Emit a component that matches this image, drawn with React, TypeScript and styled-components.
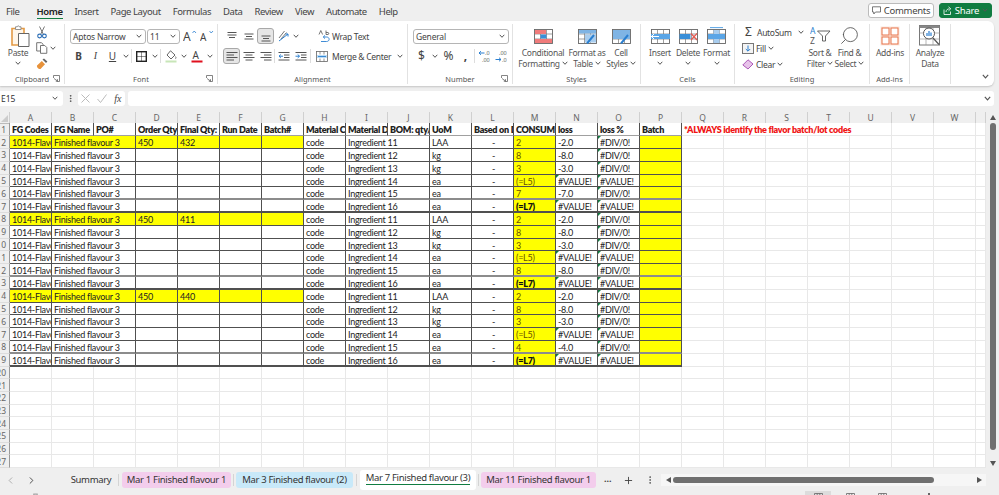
import React from "react";
import styled, { createGlobalStyle } from "styled-components";
import { ChevronLeft, ChevronRight, MoreVertical, Plus, Search } from "lucide-react";

const ui = `"Noto Sans", "Open Sans", sans-serif`;
const cellFont = `Lato, "Noto Sans", sans-serif`;

const GlobalStyle = createGlobalStyle`
  html, body {
    margin: 0;
    background: #efefef;
    overflow: hidden;
  }
  #root {
    width: 999px;
    height: 495px;
    overflow: hidden;
  }
`;

const Page = styled.div`
  display: flex;
  flex-direction: column;
  width: 999px;
  height: 495px;
  font-family: ${ui};
  color: #333;
  overflow: hidden;
`;

/* ---------- top menu ---------- */

const TopBar = styled.div`
  display: flex;
  align-items: center;
  height: 21px;
  flex: none;
  padding: 0 7px 0 6px;
  gap: 12px;
`;

const MenuItem = styled.div<{ $active?: boolean }>`
  font-size: 9.5px;
  letter-spacing: -0.42px;
  line-height: 13px;
  padding-top: 2px;
  margin-left: ${(p) => (p.$active ? 5 : 0)}px;
  color: ${(p) => (p.$active ? "#222" : "#444")};
  font-weight: ${(p) => (p.$active ? 600 : 400)};
  border-bottom: 1.5px solid ${(p) => (p.$active ? "#107c41" : "transparent")};
`;

const TopActions = styled.div`
  display: flex;
  gap: 5px;
  margin-left: auto;
`;

const TopButton = styled.div<{ $primary?: boolean; $w: number }>`
  display: flex;
  align-items: center;
  justify-content: center;
  gap: 3px;
  width: ${(p) => p.$w}px;
  height: 15px;
  box-sizing: border-box;
  border-radius: 3px;
  font-size: 9.5px;
  letter-spacing: -0.25px;
  background: ${(p) => (p.$primary ? "#107c41" : "#fff")};
  color: ${(p) => (p.$primary ? "#fff" : "#444")};
  border: 1px solid ${(p) => (p.$primary ? "#107c41" : "#bbb")};
`;

/* ---------- ribbon ---------- */

const Ribbon = styled.div`
  display: flex;
  flex: none;
  height: 65px;
  box-sizing: border-box;
  padding-top: 3px;
  margin-right: 5px;
  background: #fff;
  border-radius: 0 6px 6px 0;
  box-shadow: 0 1px 2px rgba(0, 0, 0, 0.18);
`;

const Group = styled.div<{ $w: number }>`
  display: flex;
  flex-direction: column;
  flex: none;
  width: ${(p) => p.$w}px;
  height: 60px;
  box-sizing: border-box;
  border-right: 1px solid #e2e2e2;
`;

const GroupBody = styled.div<{ $pad?: number }>`
  display: flex;
  flex: 1;
  min-height: 0;
  padding-left: ${(p) => p.$pad ?? 0}px;
`;

const GroupLabel = styled.div`
  display: grid;
  grid-template-columns: 1fr auto 1fr;
  align-items: center;
  height: 11px;
  flex: none;
  font-size: 7.5px;
  color: #555;
  span:last-child {
    justify-self: end;
    margin-right: 4px;
    display: flex;
  }
`;

const Stack = styled.div`
  display: flex;
  flex-direction: column;
  gap: 4px;
  padding-top: 4px;
`;

const ToolRow = styled.div`
  display: flex;
  align-items: center;
  height: 16px;
`;

const Tool = styled.div<{ $w?: number; $on?: boolean }>`
  display: flex;
  align-items: center;
  justify-content: center;
  flex: none;
  box-sizing: border-box;
  width: ${(p) => p.$w ?? 17}px;
  height: 16px;
  border-radius: 3px;
  background: ${(p) => (p.$on ? "#e6e6e6" : "transparent")};
  border: 1px solid ${(p) => (p.$on ? "#a8a8a8" : "transparent")};
`;

const ToolSep = styled.div<{ $gap?: number }>`
  width: 1px;
  height: 14px;
  flex: none;
  background: #ddd;
  margin: 0 ${(p) => p.$gap ?? 1}px;
`;

const ToolGap = styled.div<{ $w: number }>`
  width: ${(p) => p.$w}px;
  flex: none;
`;

const Select = styled.div<{ $w: number }>`
  display: flex;
  align-items: center;
  justify-content: space-between;
  box-sizing: border-box;
  flex: none;
  width: ${(p) => p.$w}px;
  height: 15px;
  margin-right: 1px;
  padding: 0 3px 0 2px;
  border: 1px solid #b5b5b5;
  border-radius: 3px;
  font-size: 8.5px;
  letter-spacing: -0.2px;
  color: #444;
  white-space: nowrap;
`;

const ToolText = styled.span`
  font-size: 8.5px;
  letter-spacing: -0.3px;
  color: #444;
  white-space: nowrap;
`;

const Glyph = styled.span<{ $serif?: boolean; $bold?: boolean; $italic?: boolean; $under?: boolean; $size?: number; $color?: string }>`
  font-family: ${(p) => (p.$serif ? `"Liberation Serif", serif` : ui)};
  font-weight: ${(p) => (p.$bold ? 700 : 400)};
  font-style: ${(p) => (p.$italic ? "italic" : "normal")};
  text-decoration: ${(p) => (p.$under ? "underline" : "none")};
  font-size: ${(p) => p.$size ?? 9}px;
  color: ${(p) => p.$color ?? "#444"};
  line-height: 1;
`;

const BigButton = styled.div<{ $w: number }>`
  display: flex;
  flex-direction: column;
  align-items: center;
  flex: none;
  width: ${(p) => p.$w}px;
  font-size: 8.5px;
  letter-spacing: -0.3px;
  line-height: 11px;
  color: #555;
  white-space: nowrap;
  text-align: center;
`;

const BigIcon = styled.div<{ $shift?: number }>`
  display: flex;
  align-items: center;
  justify-content: center;
  height: 23px;
  flex: none;
  padding-left: ${(p) => p.$shift ?? 0}px;
`;

const LabelLine = styled.div`
  display: flex;
  align-items: center;
  justify-content: center;
  gap: 2px;
  height: 11px;
`;

const SmallColumn = styled.div<{ $w: number }>`
  display: flex;
  flex-direction: column;
  width: ${(p) => p.$w}px;
  flex: none;
`;

const SmallRow = styled.div`
  display: flex;
  align-items: center;
  height: 16px;
  gap: 2px;
`;

const CollapseSlot = styled.div`
  display: flex;
  align-items: flex-end;
  margin-left: auto;
  padding: 0 5px 7px 0;
`;

const Magnifier = styled(Search)`
  transform: scaleX(-1);
`;

/* ---------- formula bar ---------- */

const FormulaBar = styled.div`
  display: flex;
  align-items: center;
  flex: none;
  height: 15px;
  margin-top: 5px;
  margin-right: 5px;
`;

const NameBox = styled.div`
  display: flex;
  align-items: center;
  justify-content: space-between;
  box-sizing: border-box;
  width: 63px;
  height: 15px;
  padding: 0 5px 0 1px;
  background: #fff;
  border-radius: 0 3px 3px 0;
  font-size: 8.5px;
  color: #333;
`;

const FnBox = styled.div`
  display: flex;
  align-items: center;
  justify-content: space-around;
  width: 47px;
  height: 15px;
  background: #fff;
  border-radius: 3px;
  margin: 0 3px 0 0;
`;

const FormulaInput = styled.div`
  display: flex;
  align-items: center;
  justify-content: flex-end;
  flex: 1;
  height: 15px;
  padding-right: 3px;
  background: #fff;
  border-radius: 3px;
`;

const DotsSlot = styled.div`
  display: flex;
  justify-content: center;
  width: 15px;
`;

/* ---------- sheet ---------- */

const SheetArea = styled.div`
  display: flex;
  flex: none;
  height: 362px;
  margin-top: 1px;
  padding-top: 5px;
  box-sizing: border-box;
`;

const SheetGrid = styled.div`
  width: 986px;
  flex: none;
  overflow: hidden;
`;

const Row = styled.div<{ $h: number }>`
  display: grid;
  grid-template-columns: 10px repeat(23, 42px) 10px;
  height: ${(p) => p.$h}px;
`;

const Corner = styled.div`
  display: flex;
  align-items: flex-end;
  justify-content: flex-end;
  padding: 0 1px 1px 0;
  border-right: 1px solid #d0d0d0;
  border-bottom: 1px solid #bbb;
`;

const ColHead = styled.div`
  display: flex;
  align-items: center;
  justify-content: center;
  box-sizing: border-box;
  font-size: 8.5px;
  color: #666;
  border-right: 1px solid #d0d0d0;
  border-bottom: 1px solid #777;
`;

const RowHead = styled.div`
  display: flex;
  align-items: center;
  justify-content: flex-end;
  box-sizing: border-box;
  overflow: hidden;
  padding-right: 3px;
  font-size: 8.5px;
  color: #666;
  border-right: 1px solid #999;
  border-bottom: 1px solid #ddd;
`;

const Cell = styled.div<{
  $fill?: string;
  $bold?: boolean;
  $color?: string;
  $center?: boolean;
  $right?: string;
  $bottom?: string;
  $heavy?: boolean;
  $span?: number;
  $flag?: boolean;
}>`
  position: relative;
  box-sizing: border-box;
  min-width: 0;
  overflow: hidden;
  grid-column: span ${(p) => p.$span ?? 1};
  padding-left: 2px;
  font-family: ${cellFont};
  font-size: 9px;
  letter-spacing: ${(p) => (p.$bold ? -0.28 : -0.26)}px;
  line-height: 13px;
  white-space: nowrap;
  text-align: ${(p) => (p.$center ? "center" : "left")};
  font-weight: ${(p) => (p.$bold ? 800 : 400)};
  color: ${(p) => p.$color ?? "#222"};
  background: ${(p) => p.$fill ?? "#fff"};
  border-right: 1px solid ${(p) => p.$right ?? "#e8e8e8"};
  border-bottom: ${(p) => (p.$heavy ? 2 : 1)}px solid ${(p) => p.$bottom ?? "#e8e8e8"};
  &::before {
    content: "";
    display: ${(p) => (p.$flag ? "block" : "none")};
    position: absolute;
    top: 0;
    left: 0;
    border-top: 3px solid #107c41;
    border-right: 3px solid transparent;
  }
`;

const VScroll = styled.div`
  display: flex;
  flex-direction: column;
  align-items: center;
  flex: 1;
  padding-top: 3px;
`;

const VThumb = styled.div`
  width: 6px;
  height: 327px;
  margin: 2px 0 11px;
  flex: none;
  border-radius: 3px;
  background: #6f6f6f;
`;

/* ---------- sheet tabs ---------- */

const TabBar = styled.div`
  display: flex;
  align-items: center;
  flex: none;
  height: 22px;
  font-size: 9.5px;
`;

const TabNav = styled.div`
  display: flex;
  align-items: center;
  gap: 10px;
  width: 67px;
  padding-left: 5px;
  box-sizing: border-box;
  flex: none;
`;

const Tab = styled.div<{ $tint?: string; $active?: boolean; $w: number }>`
  display: flex;
  align-items: center;
  justify-content: center;
  flex: none;
  width: ${(p) => p.$w}px;
  height: ${(p) => (p.$active ? 20 : 16)}px;
  box-sizing: border-box;
  padding-bottom: ${(p) => (p.$active ? 3 : 0)}px;
  border-radius: 3px;
  background: ${(p) => (p.$active ? "#fff" : p.$tint ?? "transparent")};
  color: #333;
  letter-spacing: -0.33px;
  white-space: nowrap;
  span {
    line-height: 12px;
    border-bottom: ${(p) => (p.$active ? "1.5px solid #107c41" : "none")};
  }
`;

const TabSep = styled.div<{ $gap: number }>`
  width: 1px;
  height: 12px;
  flex: none;
  background: #d4d4d4;
  margin: 0 ${(p) => p.$gap}px;
`;

const TabTools = styled.div`
  display: flex;
  align-items: center;
  justify-content: space-between;
  width: 51px;
  margin-left: 8px;
  flex: none;
`;

const HScroll = styled.div`
  display: flex;
  align-items: center;
  flex: none;
  width: 325px;
  height: 12px;
  margin-left: 6px;
  padding: 0 3px 0 5px;
  box-sizing: border-box;
  background: #f6f6f6;
`;

const HThumb = styled.div`
  width: 261px;
  height: 6px;
  margin: 0 auto 0 1px;
  border-radius: 3px;
  background: #6f6f6f;
`;

const StatusBar = styled.div`
  display: flex;
  align-items: flex-start;
  flex: none;
  height: 5px;
  overflow: hidden;
  padding-left: 33px;
`;

const AccessMark = styled.div`
  display: flex;
  width: 5px;
  height: 5px;
  padding-top: 2px;
  margin-right: 767px;
`;

const ViewButton = styled.div<{ $on?: boolean }>`
  display: flex;
  justify-content: center;
  width: 26px;
  height: 5px;
  padding-top: 2px;
  margin-right: 6px;
  background: ${(p) => (p.$on ? "#dcdcdc" : "transparent")};
`;

const ZoomHandle = styled.div`
  width: 2px;
  height: 3px;
  margin: 2px 0 0 27px;
  background: #666;
`;

/* ---------- icons ---------- */

const Chev: React.FC<{ size?: number }> = ({ size = 6 }) => (
  <svg width={size} height={size * 0.7} viewBox="0 0 6 4" fill="none" stroke="#555" strokeWidth="1">
    <path d="M0.7 0.7 3 3.2 5.3 0.7" />
  </svg>
);

const Launcher = () => (
  <svg width="7" height="7" viewBox="0 0 7 7" fill="none" stroke="#666" strokeWidth="0.8">
    <path d="M0.5 3V0.5H6.5V6.5H3.5M1 3.5 4.5 6M4.5 4.2V6H2.7" />
  </svg>
);

const Lines: React.FC<{ rows: number[][]; accent?: "in" | "out" }> = ({ rows, accent }) => (
  <svg width="12" height="11" viewBox="0 0 12 11" fill="none" stroke="#555" strokeWidth="1">
    {rows.map((r, i) => (
      <path key={i} d={`M${r[0]} ${r[1]}H${r[2]}`} />
    ))}
    {accent === "in" && <path d="M5 5.2H1M2.8 3.5 1 5.2 2.8 6.9" stroke="#2a7fd0" />}
    {accent === "out" && <path d="M0.5 5.2H4.5M2.7 3.5 4.5 5.2 2.7 6.9" stroke="#2a7fd0" />}
  </svg>
);

const indentRows = [
  [0.5, 1.5, 11.5],
  [6, 4, 11.5],
  [6, 6.5, 11.5],
  [0.5, 9, 11.5],
];

const ScissorsIcon = () => (
  <svg width="10" height="13" viewBox="0 0 10 13" fill="none">
    <path d="M2.5 0.5 6.2 8M7.5 0.5 3.8 8" stroke="#666" strokeWidth="0.9" />
    <circle cx="2.6" cy="10" r="1.9" stroke="#2a6db5" strokeWidth="1.1" />
    <circle cx="7.4" cy="10" r="1.9" stroke="#2a6db5" strokeWidth="1.1" />
  </svg>
);

const PasteIcon = () => (
  <svg width="20" height="22" viewBox="0 0 20 22" fill="none">
    <path d="M2 3.5H14V20H2Z" fill="#fff6ea" stroke="#e39a45" strokeWidth="1.6" />
    <path d="M5.5 4.5V1.8H7.2C7.6 0.4 9 0.4 9.3 1.8H11V4.5Z" fill="#fff" stroke="#888" strokeWidth="0.9" />
    <path d="M8.5 8.5H19V21.5H8.5Z" fill="#fff" stroke="#666" strokeWidth="1" />
  </svg>
);

const CopyIcon = () => (
  <svg width="12" height="12" viewBox="0 0 12 12" fill="none" stroke="#666" strokeWidth="0.9">
    <path d="M0.7 0.7H5.5L7 2.2V9H0.7Z" fill="#fff" />
    <path d="M4.5 3.5H8.8L10.8 5.5V11.3H4.5Z" fill="#fff" />
  </svg>
);

const BrushIcon = () => (
  <svg width="12" height="12" viewBox="0 0 12 12">
    <path d="M6.5 1.5 8 0.4 11.4 3.5 10 5Z" fill="#666" />
    <path d="M1 7.5 5.8 3 9 6.2 4.5 11C3 11.5 0.5 9.5 1 7.5Z" fill="#e8923a" />
  </svg>
);

const BorderIcon = () => (
  <svg width="11" height="11" viewBox="0 0 11 11" fill="none" stroke="#222">
    <rect x="0.7" y="0.7" width="9.6" height="9.6" strokeWidth="1.4" />
    <path d="M5.5 1V10M1 5.5H10" strokeWidth="0.5" />
  </svg>
);

const FillIcon = () => (
  <svg width="12" height="13" viewBox="0 0 12 13" fill="none">
    <path d="M5.5 0.8 10 5 6 9 2 5Z" stroke="#555" strokeWidth="0.9" fill="#fff" />
    <path d="M10.5 6.5C11.5 8 10.8 8.8 10.3 8.5" stroke="#555" strokeWidth="0.8" />
    <rect x="0.5" y="10.5" width="11" height="2" fill="#c8e6b8" />
  </svg>
);

const FontColorIcon = () => (
  <svg width="12" height="13" viewBox="0 0 12 13">
    <text x="1.5" y="9" fontSize="10" fill="#444" fontFamily="Noto Sans">A</text>
    <rect x="0.5" y="10.5" width="11" height="2" fill="#e0101e" />
  </svg>
);

const GrowIcon: React.FC<{ down?: boolean; size: number }> = ({ down, size }) => (
  <svg width="14" height="13" viewBox="0 0 14 13">
    <text x="0" y="11" fontSize={size} fill="#444" fontFamily="Noto Sans">A</text>
    <path d={down ? "M9.5 1 11.2 3 13 1" : "M9.5 3 11.2 1 13 3"} fill="none" stroke="#2a7fd0" strokeWidth="0.8" />
  </svg>
);

const OrientIcon = () => (
  <svg width="12" height="12" viewBox="0 0 12 12" fill="none">
    <path d="M2 8 7.5 1M4 9 9.5 2.5" stroke="#666" strokeWidth="0.9" />
    <path d="M2 11 11 4M11 4H8.5M11 4V6.5" stroke="#2a7fd0" strokeWidth="1" />
  </svg>
);

const WrapIcon = () => (
  <svg width="13" height="13" viewBox="0 0 13 13" fill="none">
    <path d="M3 11.5H8.5C12 11.5 12 7 8.5 7H5.5M7 5.4 5.2 7 7 8.6" stroke="#2a7fd0" strokeWidth="0.9" />
    <path d="M1 4.5 2.8 0.5 4.6 4.5M8 0.5V4.5H10C11 4.5 11 2.5 10 2.5H8" stroke="#555" strokeWidth="0.8" />
  </svg>
);

const MergeIcon = () => (
  <svg width="12" height="11" viewBox="0 0 12 11" fill="none">
    <rect x="0.5" y="0.5" width="11" height="10" stroke="#666" strokeWidth="0.8" />
    <rect x="1" y="4" width="10" height="3" fill="#bcdcf5" />
    <path d="M4 .5V3.5M8 .5V3.5M4 7.5V10.5M8 7.5V10.5" stroke="#666" strokeWidth="0.7" />
    <path d="M2 5.5H10" stroke="#2a7fd0" strokeWidth="0.9" />
  </svg>
);

const DecimalIcon: React.FC<{ more?: boolean }> = ({ more }) => (
  <svg width="14" height="13" viewBox="0 0 14 13" fill="none">
    {more ? (
      <>
        <text x="4" y="5" fontSize="5.5" fill="#666" fontFamily="Noto Sans">.00</text>
        <text x="7" y="12" fontSize="5.5" fill="#666" fontFamily="Noto Sans">.0</text>
        <path d="M0.5 9.5H6M4 7.7 6 9.5 4 11.3" stroke="#2a7fd0" strokeWidth="1" />
      </>
    ) : (
      <>
        <text x="7" y="5" fontSize="5.5" fill="#666" fontFamily="Noto Sans">.0</text>
        <text x="4" y="12" fontSize="5.5" fill="#666" fontFamily="Noto Sans">.00</text>
        <path d="M6.5 3H1M3 1.2 1 3 3 4.8" stroke="#2a7fd0" strokeWidth="1" />
      </>
    )}
  </svg>
);

const SheetBase: React.FC<{ children?: React.ReactNode }> = ({ children }) => (
  <svg width="19" height="17" viewBox="0 0 19 17" fill="none">
    <rect x="0.5" y="2.5" width="18" height="14" fill="#fff" stroke="#666" strokeWidth="0.9" />
    <path d="M6.5 2.5V16.5M12.5 2.5V16.5M0.5 7H18.5M0.5 12H18.5" stroke="#777" strokeWidth="0.7" />
    {children}
  </svg>
);

const ConditionalIcon = () => (
  <SheetBase>
    <rect x="1" y="3" width="11" height="4" fill="#f07b7b" />
    <rect x="1" y="12" width="17" height="4" fill="#f07b7b" />
    <rect x="6.5" y="7.5" width="6" height="4" fill="#3a8fd8" />
  </SheetBase>
);

const TableIcon = () => (
  <SheetBase>
    <rect x="1" y="3" width="17" height="3.5" fill="#7fb4e4" />
    <rect x="7" y="7.5" width="11" height="8" fill="#a8cdef" />
    <path d="M9 16.5 16 8" stroke="#2a7fd0" strokeWidth="2" />
  </SheetBase>
);

const CellStyleIcon = () => (
  <SheetBase>
    <rect x="1" y="3" width="17" height="9" fill="#7fb4e4" />
    <path d="M9 16.5 16 8" stroke="#2a7fd0" strokeWidth="2" />
  </SheetBase>
);

const InsertIcon = () => (
  <SheetBase>
    <rect x="0" y="7" width="19" height="5" fill="#5aa5e6" />
    <path d="M8 9.5H0M3 7 .5 9.5 3 12" stroke="#fff" strokeWidth="1" />
  </SheetBase>
);

const DeleteIcon = () => (
  <SheetBase>
    <rect x="0.5" y="7" width="11" height="5" fill="#3a8fd8" />
    <path d="M12 6.5 18 13M18 6.5 12 13" stroke="#e5584f" strokeWidth="1.2" />
  </SheetBase>
);

const FormatIcon = () => (
  <SheetBase>
    <path d="M3 .6H16" stroke="#5aa5e6" strokeWidth="1" />
    <rect x="6.5" y="3" width="6" height="13" fill="#a8cdef" />
    <rect x="1" y="7" width="17" height="5" fill="#5aa5e6" />
  </SheetBase>
);

const SortIcon = () => (
  <svg width="21" height="20" viewBox="0 0 21 20" fill="none">
    <text x="0" y="8" fontSize="8.5" fill="#2a7fd0" fontFamily="Noto Sans">A</text>
    <text x="0" y="18" fontSize="8.5" fill="#555" fontFamily="Noto Sans">Z</text>
    <path d="M7.5 5H20L15.5 10V15H12.5V10Z" stroke="#555" strokeWidth="0.9" />
  </svg>
);

const FillDownIcon = () => (
  <svg width="12" height="11" viewBox="0 0 12 11" fill="none">
    <rect x="0.5" y="0.5" width="11" height="10" stroke="#777" fill="#f4f4f4" />
    <path d="M6 2.5V8M3.8 6 6 8.2 8.2 6" stroke="#2a7fd0" />
  </svg>
);

const EraserIcon = () => (
  <svg width="12" height="11" viewBox="0 0 12 11" fill="none">
    <path d="M0.8 6 6 0.8 11 5 6 10Z" fill="#e7c3ea" stroke="#a44ab0" strokeWidth="0.9" />
  </svg>
);

const AddInsIcon = () => (
  <svg width="20" height="20" viewBox="0 0 20 20" fill="none">
    <rect x="0.5" y="0.5" width="19" height="19" fill="#fbe7de" />
    <g stroke="#e8754a" strokeWidth="1" fill="#fff">
      <rect x="2" y="2" width="7" height="7" />
      <rect x="11" y="2" width="7" height="7" />
      <rect x="2" y="11" width="7" height="7" />
      <rect x="11" y="11" width="7" height="7" />
    </g>
  </svg>
);

const AnalyzeIcon = () => (
  <svg width="22" height="21" viewBox="0 0 22 21" fill="none">
    <rect x="0.5" y="0.5" width="20" height="19.5" fill="#fff" stroke="#777" />
    <rect x="0.5" y="0.5" width="20" height="2.5" fill="#888" />
    <path d="M0.5 8H20.5M0.5 14H20.5M7 3V20M14 3V20" stroke="#999" strokeWidth="0.7" />
    <circle cx="10" cy="8.5" r="5.5" fill="#fff" stroke="#555" />
    <path d="M14 13 20 19.5" stroke="#555" strokeWidth="1.2" />
    <path d="M8 11V8M10 11V6M12 11V7.5" stroke="#2a7fd0" strokeWidth="1.2" />
  </svg>
);

const CommentIcon = () => (
  <svg width="9" height="9" viewBox="0 0 9 9" fill="none" stroke="#555" strokeWidth="0.8">
    <path d="M0.5 0.8H8.5V6H3.5L1.8 8V6H0.5Z" />
  </svg>
);

const ShareIcon = () => (
  <svg width="9" height="9" viewBox="0 0 9 9" fill="none" stroke="#fff" strokeWidth="0.8">
    <path d="M1 3.5V8.5H7.5V5.5M3 6C3 4 4.5 2.8 6.5 2.8M5.5 0.8 7.8 2.8 5.5 4.8" />
  </svg>
);

const MiniGrid = () => (
  <svg width="9" height="3" viewBox="0 0 9 3" fill="none" stroke="#666" strokeWidth="0.8">
    <path d="M.5 3V.5H8.5V3M3.2 .5V3M5.8 .5V3" />
  </svg>
);

const Arrow: React.FC<{ dir: "up" | "down" | "left" | "right" }> = ({ dir }) => {
  const d = { up: "M0 5 3 0 6 5Z", down: "M0 0 3 5 6 0Z", left: "M5 0 0 3 5 6Z", right: "M0 0 5 3 0 6Z" }[dir];
  return (
    <svg width="6" height="6" viewBox="0 0 6 6" fill="#555">
      <path d={d} />
    </svg>
  );
};

/* ---------- data ---------- */

const columns = "ABCDEFGHIJKLMNOPQRSTUVW".split("");
const headers = ["FG Codes", "FG Name", "PO#", "Order Qty:", "Final Qty:", "Run Date", "Batch#", "Material C", "Material D", "BOM: qty/u", "UoM", "Based on D", "CONSUME", "loss", "loss %", "Batch"];
const units = ["LAA", "kg", "kg", "ea", "ea", "ea"];
const dark = "#505050";
const yellow = "#ffff00";
const inkOnYellow = "#6a4f00";

const batches = [
  { final: "432", used: "7", loss: "-7.0" },
  { final: "411", used: "8", loss: "-8.0" },
  { final: "440", used: "4", loss: "-4.0" },
];

type Line = { first: boolean; ingredient: string; unit: string; qty: string; used: string; loss: string; pct: string; last: boolean; beforeLast: boolean; final: string };

const lines: Line[] = batches.flatMap((b) => {
  const used = ["2", "8", "3", "(=L5)", b.used, "(=L7)"];
  const loss = ["-2.0", "-8.0", "-3.0", "#VALUE!", b.loss, "#VALUE!"];
  const pct = ["#DIV/0!", "#DIV/0!", "#DIV/0!", "#VALUE!", "#DIV/0!", "#VALUE!"];
  return used.map((u, i) => ({
    first: i === 0,
    ingredient: `Ingredient ${11 + i}`,
    unit: units[i],
    qty: "450",
    used: u,
    loss: loss[i],
    pct: pct[i],
    last: i === 5,
    beforeLast: i === 4,
    final: b.final,
  }));
});

const EmptyCells: React.FC<{ count: number }> = ({ count }) => (
  <>
    {Array.from({ length: count }, (_, i) => (
      <Cell key={i} />
    ))}
  </>
);

const DataRow: React.FC<{ line: Line; num: number }> = ({ line, num }) => {
  const edge = {
    $right: dark,
    $bottom: line.beforeLast ? "#8c8c8c" : dark,
    $heavy: line.last || line.beforeLast,
  };
  const band = line.first ? yellow : undefined;
  return (
    <Row $h={12.8}>
      <RowHead>{num}</RowHead>
      <Cell {...edge} $fill={band}>1014-Flavo</Cell>
      <Cell {...edge} $fill={band} $span={2}>Finished flavour 3</Cell>
      <Cell {...edge} $fill={band}>{line.first && line.qty}</Cell>
      <Cell {...edge} $fill={band}>{line.first && line.final}</Cell>
      <Cell {...edge} $fill={band} />
      <Cell {...edge} $fill={band} />
      <Cell {...edge}>code</Cell>
      <Cell {...edge} $span={2}>{line.ingredient}</Cell>
      <Cell {...edge}>{line.unit}</Cell>
      <Cell {...edge} $center>-</Cell>
      <Cell {...edge} $fill={yellow} $bold={line.used === "(=L7)"} $color={line.used === "(=L7)" ? "#111" : inkOnYellow}>{line.used}</Cell>
      <Cell {...edge} $flag={line.loss === "#VALUE!"}>{line.loss}</Cell>
      <Cell {...edge} $flag>{line.pct}</Cell>
      <Cell {...edge} $fill={yellow} />
      <EmptyCells count={8} />
    </Row>
  );
};

const Big: React.FC<{ icon: React.ReactNode; w: number; text: string; second?: string; noChev?: boolean }> = ({ icon, w, text, second, noChev }) => (
  <BigButton $w={w}>
    <BigIcon>{icon}</BigIcon>
    <LabelLine>{text}</LabelLine>
    <LabelLine>
      {second}
      {!noChev && <Chev />}
    </LabelLine>
  </BigButton>
);

const Label: React.FC<{ text: string; launcher?: boolean }> = ({ text, launcher }) => (
  <GroupLabel>
    <span />
    <span>{text}</span>
    <span>{launcher && <Launcher />}</span>
  </GroupLabel>
);

export default function App() {
  return (
    <Page>
      <GlobalStyle />
      <TopBar>
        {["File", "Home", "Insert", "Page Layout", "Formulas", "Data", "Review", "View", "Automate", "Help"].map((m) => (
          <MenuItem key={m} $active={m === "Home"}>{m}</MenuItem>
        ))}
        <TopActions>
          <TopButton $w={66}><CommentIcon />Comments</TopButton>
          <TopButton $w={53} $primary><ShareIcon />Share<Chev /></TopButton>
        </TopActions>
      </TopBar>

      <Ribbon>
        <Group $w={65}>
          <GroupBody>
            <BigButton $w={36}>
              <BigIcon $shift={3}><PasteIcon /></BigIcon>
              <LabelLine>Paste</LabelLine>
              <LabelLine><Chev /></LabelLine>
            </BigButton>
            <SmallColumn $w={24}>
              <SmallRow><Tool $w={12}><ScissorsIcon /></Tool></SmallRow>
              <SmallRow><CopyIcon /><Chev /></SmallRow>
              <SmallRow><BrushIcon /></SmallRow>
            </SmallColumn>
          </GroupBody>
          <Label text="Clipboard" launcher />
        </Group>

        <Group $w={153}>
          <GroupBody $pad={5}>
            <Stack>
              <ToolRow>
                <Select $w={76}>Aptos Narrow<Chev /></Select>
                <Select $w={33}>11<Chev /></Select>
                <Tool><GrowIcon size={12} /></Tool>
                <Tool><GrowIcon size={10} down /></Tool>
              </ToolRow>
              <ToolRow>
                <Tool><Glyph $bold $size={10}>B</Glyph></Tool>
                <Tool><Glyph $italic $serif $size={10}>I</Glyph></Tool>
                <Tool><Glyph $under $size={10}>U</Glyph></Tool>
                <Tool $w={9}><Chev /></Tool>
                <ToolSep />
                <Tool><BorderIcon /></Tool>
                <Tool $w={9}><Chev /></Tool>
                <ToolSep />
                <Tool><FillIcon /></Tool>
                <Tool $w={9}><Chev /></Tool>
                <Tool><FontColorIcon /></Tool>
                <Tool $w={9}><Chev /></Tool>
              </ToolRow>
            </Stack>
          </GroupBody>
          <Label text="Font" launcher />
        </Group>

        <Group $w={190}>
          <GroupBody $pad={5}>
            <Stack>
              <ToolRow>
                <Tool><Lines rows={[[1.5, 1.5, 10.5], [1.5, 4, 10.5], [3, 6.5, 9]]} /></Tool>
                <Tool><Lines rows={[[1.5, 3, 10.5], [3, 5.5, 9], [1.5, 8, 10.5]]} /></Tool>
                <Tool $on><Lines rows={[[1.5, 5, 10.5], [3, 7.5, 9], [1.5, 10, 10.5]]} /></Tool>
                <Tool><OrientIcon /></Tool>
                <Tool $w={9}><Chev /></Tool>
                <ToolGap $w={17} />
                <Tool $w={15}><WrapIcon /></Tool>
                <ToolText>Wrap Text</ToolText>
              </ToolRow>
              <ToolRow>
                <Tool $on><Lines rows={[[0.5, 1.5, 11.5], [0.5, 4, 8], [0.5, 6.5, 11.5], [0.5, 9, 8]]} /></Tool>
                <Tool><Lines rows={[[0.5, 1.5, 11.5], [2.5, 4, 9.5], [0.5, 6.5, 11.5], [2.5, 9, 9.5]]} /></Tool>
                <Tool><Lines rows={[[0.5, 1.5, 11.5], [4, 4, 11.5], [0.5, 6.5, 11.5], [4, 9, 11.5]]} /></Tool>
                <ToolSep $gap={0} />
                <Tool><Lines rows={indentRows} accent="in" /></Tool>
                <Tool><Lines rows={indentRows} accent="out" /></Tool>
                <ToolSep />
                <Tool $w={20}><MergeIcon /></Tool>
                <ToolText>Merge &amp; Center</ToolText>
                <Tool $w={18}><Chev /></Tool>
              </ToolRow>
            </Stack>
          </GroupBody>
          <Label text="Alignment" />
        </Group>

        <Group $w={105}>
          <GroupBody $pad={5}>
            <Stack>
              <ToolRow>
                <Select $w={96}>General<Chev /></Select>
              </ToolRow>
              <ToolRow>
                <Tool><Glyph $size={12}>$</Glyph></Tool>
                <Tool $w={9}><Chev /></Tool>
                <Tool $w={19}><Glyph $size={12}>%</Glyph></Tool>
                <Tool $w={15}><Glyph $size={12} $bold>,</Glyph></Tool>
                <ToolSep />
                <Tool><DecimalIcon /></Tool>
                <Tool><DecimalIcon more /></Tool>
              </ToolRow>
            </Stack>
          </GroupBody>
          <Label text="Number" launcher />
        </Group>

        <Group $w={128}>
          <GroupBody $pad={4}>
            <Big icon={<ConditionalIcon />} w={52} text="Conditional" second="Formatting" />
            <Big icon={<TableIcon />} w={36} text="Format as" second="Table" />
            <Big icon={<CellStyleIcon />} w={32} text="Cell" second="Styles" />
          </GroupBody>
          <Label text="Styles" />
        </Group>

        <Group $w={94}>
          <GroupBody $pad={5}>
            <Big icon={<InsertIcon />} w={28} text="Insert" />
            <Big icon={<DeleteIcon />} w={28} text="Delete" />
            <Big icon={<FormatIcon />} w={29} text="Format" />
          </GroupBody>
          <Label text="Cells" />
        </Group>

        <Group $w={135}>
          <GroupBody $pad={7}>
            <SmallColumn $w={64}>
              <SmallRow>
                <Tool $w={13}><Glyph $size={12}>Σ</Glyph></Tool>
                <ToolText>AutoSum</ToolText>
                <Tool $w={14}><Chev /></Tool>
              </SmallRow>
              <SmallRow><FillDownIcon /><ToolText>Fill</ToolText><Chev /></SmallRow>
              <SmallRow><EraserIcon /><ToolText>Clear</ToolText><Chev /></SmallRow>
            </SmallColumn>
            <Big icon={<SortIcon />} w={28} text="Sort &" second="Filter" />
            <Big icon={<Magnifier size={21} strokeWidth={1} color="#555" />} w={31} text="Find &" second="Select" />
          </GroupBody>
          <Label text="Editing" />
        </Group>

        <Group $w={40}>
          <GroupBody>
            <Big icon={<AddInsIcon />} w={40} text="Add-ins" noChev />
          </GroupBody>
          <Label text="Add-ins" />
        </Group>

        <Group $w={41}>
          <GroupBody>
            <Big icon={<AnalyzeIcon />} w={40} text="Analyze" second="Data" noChev />
          </GroupBody>
        </Group>

        <CollapseSlot><Chev size={7} /></CollapseSlot>
      </Ribbon>

      <FormulaBar>
        <NameBox>E15<Chev /></NameBox>
        <DotsSlot><MoreVertical size={9} color="#444" /></DotsSlot>
        <FnBox>
          <svg width="9" height="9" viewBox="0 0 9 9" stroke="#bbb" fill="none"><path d="M.5 .5 8.5 8.5M8.5 .5 .5 8.5" /></svg>
          <svg width="10" height="9" viewBox="0 0 10 9" stroke="#bbb" fill="none"><path d="M.5 5 3.5 8.5 9.5 .5" /></svg>
          <Glyph $serif $italic $size={10}>fx</Glyph>
        </FnBox>
        <FormulaInput><Chev size={7} /></FormulaInput>
      </FormulaBar>

      <SheetArea>
        <SheetGrid>
          <Row $h={11.4}>
            <Corner>
              <svg width="7" height="7" viewBox="0 0 7 7"><path d="M7 0V7H0Z" fill="#ccc" /></svg>
            </Corner>
            {columns.map((c) => <ColHead key={c}>{c}</ColHead>)}
            <ColHead />
          </Row>
          <Row $h={12.8}>
            <RowHead>1</RowHead>
            {headers.map((h) => (
              <Cell key={h} $bold $right={dark} $bottom="#a0a0a0">{h}</Cell>
            ))}
            <Cell $bold $color="#f01414" $span={5}>*ALWAYS identify the flavor batch/lot codes</Cell>
            <EmptyCells count={3} />
          </Row>
          {lines.map((l, i) => <DataRow key={i} line={l} num={i + 2} />)}
          {Array.from({ length: 8 }, (_, i) => (
            <Row key={i} $h={12.7}>
              <RowHead>{i + 20}</RowHead>
              <EmptyCells count={24} />
            </Row>
          ))}
        </SheetGrid>
        <VScroll>
          <Arrow dir="up" />
          <VThumb />
          <Arrow dir="down" />
        </VScroll>
      </SheetArea>

      <TabBar>
        <TabNav>
          <ChevronLeft size={11} color="#aaa" />
          <ChevronRight size={11} color="#444" />
        </TabNav>
        <Tab $w={48}><span>Summary</span></Tab>
        <TabSep $gap={3} />
        <Tab $w={109} $tint="#f3cdec"><span>Mar 1 Finished flavour 1</span></Tab>
        <TabSep $gap={2} />
        <Tab $w={117} $tint="#c8e9f9"><span>Mar 3 Finished flavour (2)</span></Tab>
        <TabSep $gap={3} />
        <Tab $w={116} $active><span>Mar 7 Finished flavour (3)</span></Tab>
        <TabSep $gap={2} />
        <Tab $w={115} $tint="#f3cdec"><span>Mar 11 Finished flavour 1</span></Tab>
        <TabTools>
          <Glyph $bold $size={9}>···</Glyph>
          <Plus size={11} color="#444" />
          <MoreVertical size={10} color="#555" />
        </TabTools>
        <HScroll>
          <Arrow dir="left" />
          <HThumb />
          <Arrow dir="right" />
        </HScroll>
      </TabBar>

      <StatusBar>
        <AccessMark><MiniGrid /></AccessMark>
        <ViewButton $on><MiniGrid /></ViewButton>
        <ViewButton><MiniGrid /></ViewButton>
        <ViewButton><MiniGrid /></ViewButton>
        <ZoomHandle />
      </StatusBar>
    </Page>
  );
}
